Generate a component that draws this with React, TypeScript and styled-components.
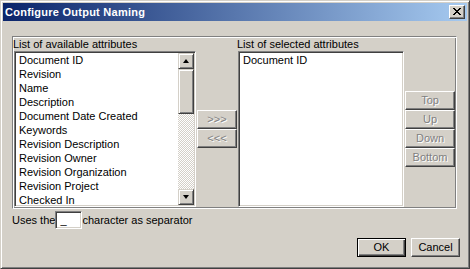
import React from 'react';
import styled, {createGlobalStyle} from 'styled-components';

const GlobalStyle = createGlobalStyle`
  html, body {
    margin: 0;
    padding: 0;
    background: #d4d0c8;
  }
  body {
    font-family: "Liberation Sans", Arial, sans-serif;
    font-size: 11px;
    color: #000;
  }
`

const available = [
    'Document ID',
    'Revision',
    'Name',
    'Description',
    'Document Date Created',
    'Keywords',
    'Revision Description',
    'Revision Owner',
    'Revision Organization',
    'Revision Project',
    'Checked In',
]

const selected = ['Document ID']

const CloseGlyph = () => {
    // classic 8x7 pixel cross
    const rects = []
    for (let i = 0; i < 7; i++) {
        rects.push(<rect key={'a' + i} x={i} y={i} width={2} height={1}/>)
        rects.push(<rect key={'b' + i} x={6 - i} y={i} width={2} height={1}/>)
    }
    return (
        <svg width="8" height="7" viewBox="0 0 8 7" fill="#000" shapeRendering="crispEdges">
            {rects}
        </svg>
    )
}

export default function App() {
    return (
        <>
            <GlobalStyle/>
            <Window>
                <TitleBar>
                    <Title>Configure Output Naming</Title>
                    <CloseButton><CloseGlyph/></CloseButton>
                </TitleBar>
                <Body>
                    <Frame>
                        <Label>List of available attributes</Label>
                        <div/>
                        <Label>List of selected attributes</Label>
                        <div/>

                        <ListBox>
                            <Items>
                                {available.map(a => <Item key={a}>{a}</Item>)}
                            </Items>
                            <ScrollBar>
                                <ScrollButton><Arrow $dir="up"/></ScrollButton>
                                <Thumb/>
                                <Track/>
                                <ScrollButton><Arrow $dir="down"/></ScrollButton>
                            </ScrollBar>
                        </ListBox>

                        <ButtonStack>
                            <Button $disabled $w={40}>&gt;&gt;&gt;</Button>
                            <Button $disabled $w={40}>&lt;&lt;&lt;</Button>
                        </ButtonStack>

                        <ListBox>
                            <Items>
                                {selected.map(a => <Item key={a}>{a}</Item>)}
                            </Items>
                        </ListBox>

                        <ButtonStack>
                            <Button $disabled $w={50}>Top</Button>
                            <Button $disabled $w={50}>Up</Button>
                            <Button $disabled $w={50}>Down</Button>
                            <Button $disabled $w={50}>Bottom</Button>
                        </ButtonStack>
                    </Frame>

                    <SeparatorRow>
                        <span>Uses the</span>
                        <TextBox>_</TextBox>
                        <span>character as separator</span>
                    </SeparatorRow>

                    <Footer>
                        <Button $default $w={49}>OK</Button>
                        <Button $w={49}>Cancel</Button>
                    </Footer>
                </Body>
            </Window>
        </>
    )
}

const Window = styled.div`
  width: 470px;
  height: 269px;
  box-sizing: border-box;
  padding: 2px;
  border: 1px solid;
  border-color: #d4d0c8 #404040 #404040 #d4d0c8;
  box-shadow: inset 1px 1px #fff, inset -1px -1px #808080;
  background: #d4d0c8;
  display: flex;
  flex-direction: column;
`

const TitleBar = styled.div`
  height: 18px;
  display: flex;
  align-items: center;
  justify-content: space-between;
  padding: 0 2px 0 2px;
  background: linear-gradient(to right, #0a246a, #a6caf0);
`

const Title = styled.div`
  color: #fff;
  font-weight: bold;
  font-size: 11px;
  letter-spacing: 0.25px;
  line-height: 18px;
`

const CloseButton = styled.div`
  width: 16px;
  height: 14px;
  box-sizing: border-box;
  border: 1px solid;
  border-color: #fff #404040 #404040 #fff;
  box-shadow: inset -1px -1px #808080;
  background: #d4d0c8;
  display: flex;
  align-items: center;
  justify-content: center;
  padding: 0 0 1px 0;
`

const Body = styled.div`
  flex: 1;
  display: flex;
  flex-direction: column;
  padding: 15px 7px 0 9px;
`

const Frame = styled.div`
  width: 445px;
  box-sizing: border-box;
  border: 1px solid;
  border-color: #808080 #fff #fff #808080;
  box-shadow: inset 1px 1px #fff, inset -1px -1px #808080;
  padding: 1px;
  display: grid;
  grid-template-columns: 182px 40px 166px 50px;
  grid-template-rows: 13px 156px;
  column-gap: 1px;
`

const Label = styled.div`
  line-height: 13px;
  margin-left: -1px;
  white-space: nowrap;
`

const ListBox = styled.div`
  box-sizing: border-box;
  height: 156px;
  border: 1px solid;
  border-color: #808080 #fff #fff #808080;
  box-shadow: inset 1px 1px #404040, inset -1px -1px #d4d0c8;
  padding: 1px;
  background: #fff;
  display: flex;
  overflow: hidden;
`

const Items = styled.div`
  flex: 1;
  overflow: hidden;
  padding-left: 3px;
`

const Item = styled.div`
  height: 14px;
  line-height: 14px;
  white-space: nowrap;
`

const raised = `
  box-sizing: border-box;
  border: 1px solid;
  border-color: #d4d0c8 #404040 #404040 #d4d0c8;
  box-shadow: inset 1px 1px #fff, inset -1px -1px #808080;
  background: #d4d0c8;
`

const ScrollBar = styled.div`
  width: 16px;
  display: flex;
  flex-direction: column;
`

const ScrollButton = styled.div`
  ${raised};
  height: 16px;
  display: flex;
  align-items: center;
  justify-content: center;
`

const Arrow = styled.div<{ $dir: 'up' | 'down' }>`
  width: 0;
  height: 0;
  border-left: 3.5px solid transparent;
  border-right: 3.5px solid transparent;
  ${p => p.$dir === 'up'
    ? 'border-bottom: 4px solid #000;'
    : 'border-top: 4px solid #000;'}
`

const Thumb = styled.div`
  ${raised};
  height: 45px;
`

const Track = styled.div`
  flex: 1;
  background: repeating-conic-gradient(#d4d0c8 0 25%, #fff 0 50%) 0 0 / 2px 2px;
`

const ButtonStack = styled.div`
  align-self: center;
  display: flex;
  flex-direction: column;
`

const Button = styled.div<{ $w: number, $disabled?: boolean, $default?: boolean }>`
  width: ${p => p.$w}px;
  height: 19px;
  box-sizing: border-box;
  border: 1px solid;
  border-color: ${p => p.$default ? '#000' : '#fff #404040 #404040 #fff'};
  box-shadow: ${p => p.$default
    ? 'inset 1px 1px #fff, inset -1px -1px #404040, inset -2px -2px #808080'
    : 'inset -1px -1px #808080'};
  background: #d4d0c8;
  display: flex;
  align-items: center;
  justify-content: center;
  line-height: 17px;
  color: ${p => p.$disabled ? '#808080' : '#000'};
  text-shadow: ${p => p.$disabled ? '1px 1px #fff' : 'none'};
`

const SeparatorRow = styled.div`
  margin-top: 2px;
  display: flex;
  align-items: center;
  height: 18px;
  white-space: nowrap;
`

const TextBox = styled.div`
  width: 27px;
  height: 18px;
  box-sizing: border-box;
  border: 1px solid;
  border-color: #808080 #fff #fff #808080;
  box-shadow: inset 1px 1px #404040, inset -1px -1px #d4d0c8;
  background: #fff;
  padding: 1px 0 0 4px;
  line-height: 14px;
`

const Footer = styled.div`
  margin-top: 9px;
  display: flex;
  justify-content: flex-end;
  gap: 5px;
`
